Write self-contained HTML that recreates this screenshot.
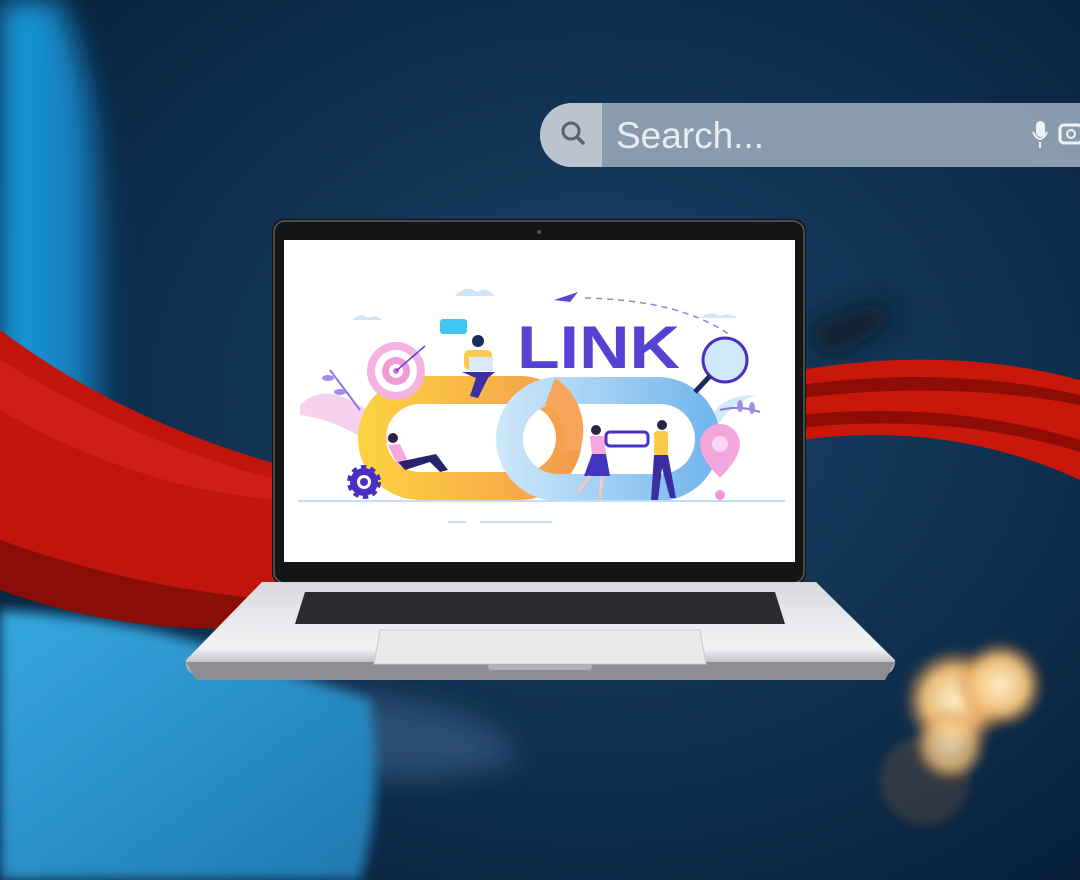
<!DOCTYPE html>
<html><head><meta charset="utf-8"><style>
html,body{margin:0;padding:0;width:1080px;height:880px;overflow:hidden;background:#0b2540}
svg{display:block}
</style></head><body>
<svg width="1080" height="880" viewBox="0 0 1080 880" xmlns="http://www.w3.org/2000/svg">
<defs>
<radialGradient id="bg" cx="0.55" cy="0.45" r="0.7">
<stop offset="0" stop-color="#1b4467"/><stop offset="0.6" stop-color="#0f2f4f"/><stop offset="1" stop-color="#08203a"/>
</radialGradient>
<linearGradient id="sweater" x1="0" y1="0" x2="1" y2="0">
<stop offset="0" stop-color="#1aa0e0"/><stop offset="0.7" stop-color="#1278b8"/><stop offset="1" stop-color="#0f3a60" stop-opacity="0"/>
</linearGradient>
<linearGradient id="knit" x1="0" y1="0" x2="1" y2="1">
<stop offset="0" stop-color="#35a8e0"/><stop offset="1" stop-color="#1f78b0"/>
</linearGradient>
<radialGradient id="bok" cx="0.5" cy="0.5" r="0.5">
<stop offset="0" stop-color="#fff0c8"/><stop offset="0.6" stop-color="#f5c27a" stop-opacity="0.95"/><stop offset="1" stop-color="#c07030" stop-opacity="0"/>
</radialGradient>
<linearGradient id="base" x1="0" y1="0" x2="0" y2="1">
<stop offset="0" stop-color="#d8dadd"/><stop offset="0.7" stop-color="#f2f3f5"/><stop offset="1" stop-color="#9a9ca0"/>
</linearGradient>
<linearGradient id="yel" x1="0" y1="0" x2="1" y2="0">
<stop offset="0" stop-color="#fdd340"/><stop offset="1" stop-color="#f49a4e"/>
</linearGradient>
<linearGradient id="blu" x1="0" y1="0" x2="1" y2="0">
<stop offset="0" stop-color="#cfe8fb"/><stop offset="1" stop-color="#6fb4ec"/>
</linearGradient>
<filter id="blur"><feGaussianBlur stdDeviation="14"/></filter>
<filter id="blur3"><feGaussianBlur stdDeviation="6"/></filter>
<filter id="blur2"><feGaussianBlur stdDeviation="4"/></filter>
</defs>
<rect width="1080" height="880" fill="url(#bg)"/>
<g filter="url(#blur)">
<path d="M0 0 H60 Q110 120 120 330 L110 420 L0 430Z" fill="url(#sweater)"/>
<path d="M300 690 Q500 700 520 760 Q420 790 350 770Z" fill="#2a4e70"/>
<path d="M800 330 L880 300 L900 320 L830 360Z" fill="#0a1a2c"/>
</g>
<g filter="url(#blur3)">
<path d="M0 610 Q150 620 250 660 L370 700 Q385 800 360 880 H0Z" fill="url(#knit)"/>
</g>
<g filter="url(#blur2)">
<circle cx="925" cy="780" r="45" fill="#b8763e" opacity="0.2"/>
<circle cx="955" cy="700" r="52" fill="url(#bok)"/>
<circle cx="1000" cy="685" r="45" fill="url(#bok)"/>
<circle cx="950" cy="745" r="38" fill="url(#bok)" opacity="0.8"/>
</g>
<path d="M0 330 Q120 420 280 465 L280 620 Q140 630 0 570Z" fill="#c0150c"/>
<path d="M0 360 Q150 450 280 480 L280 500 Q140 490 0 410Z" fill="#d8221a" opacity="0.7"/>
<path d="M0 540 Q140 590 280 600 L280 625 Q140 640 0 590Z" fill="#8a0e08"/>
<path d="M800 370 Q950 345 1080 380 L1080 480 Q950 420 800 440Z" fill="#c9170c"/>
<path d="M800 385 Q950 365 1080 395 L1080 405 Q950 380 800 398Z" fill="#8e0c06"/>
<path d="M800 415 Q950 400 1080 440 L1080 452 Q950 412 800 428Z" fill="#8e0c06"/>
<path d="M572 103 H1080 V167 H572 A32 32 0 0 1 572 103Z" fill="#94a5b5" opacity="0.92"/>
<path d="M572 103 H602 V167 H572 A32 32 0 0 1 572 103Z" fill="#b9c4ce"/>
<circle cx="571" cy="131" r="8" fill="none" stroke="#58636e" stroke-width="3"/>
<line x1="577" y1="137" x2="584" y2="144" stroke="#58636e" stroke-width="3.5"/>
<text x="616" y="148" font-family="Liberation Sans, sans-serif" font-size="37" fill="#e8edf2">Search...</text>
<rect x="1036" y="121" width="9" height="16" rx="4.5" fill="#eef2f5"/>
<path d="M1033 132 Q1040 146 1047 132 M1040 142 V148" stroke="#eef2f5" stroke-width="2" fill="none"/>
<rect x="1060" y="125" width="22" height="18" rx="4" fill="none" stroke="#eef2f5" stroke-width="3"/>
<circle cx="1071" cy="134" r="4" fill="none" stroke="#eef2f5" stroke-width="2"/>
<rect x="272" y="219" width="534" height="366" rx="12" fill="#141516"/>
<rect x="274" y="221" width="530" height="362" rx="11" fill="none" stroke="#5a5c60" stroke-width="1.5"/>
<circle cx="539" cy="232" r="2" fill="#555"/>
<rect x="284" y="240" width="511" height="322" fill="#ffffff"/>
<path d="M262 582 H816 L895 660 Q895 672 885 675 H195 Q185 672 186 660Z" fill="url(#base)"/>
<path d="M186 662 H895 L885 680 H196Z" fill="#8c8e92"/>
<path d="M305 592 H775 L785 624 H295Z" fill="#2a2b2e"/>
<path d="M380 630 H700 L706 664 H374Z" fill="#e6e8ea" stroke="#c8cacd" stroke-width="1"/>
<rect x="488" y="664" width="104" height="6" rx="3" fill="#b0b2b6"/>
<g>
<path d="M455 296 q10 -12 22 -4 q10 -6 18 4 Z" fill="#cfe6f8"/>
<path d="M352 320 q8 -8 16 -2 q8 -4 14 2 Z" fill="#cfe6f8"/>
<path d="M700 318 q10 -8 20 -2 q8 -4 18 2Z" fill="#cfe6f8"/>
<path d="M554 300 L578 292 L570 302Z" fill="#5b47d3"/>
<path d="M585 298 Q680 300 730 335" fill="none" stroke="#8d86d8" stroke-width="1.5" stroke-dasharray="6 5"/>
<path d="M300 405 q20 -20 50 -5 q30 15 40 40 L380 450 q-40 -30 -80 -35Z" fill="#f3c7ea" opacity="0.8"/>
<path d="M710 420 q10 -25 45 -25 L745 400 q-20 10 -30 30Z" fill="#cfeafa"/>
<path d="M420 376 H520 A62 62 0 0 1 520 500 H420 A62 62 0 0 1 420 376Z M420 404 H522 A34 34 0 0 1 522 472 H420 A34 34 0 0 1 420 404Z" fill="url(#yel)" fill-rule="evenodd"/>
<path d="M558 377 H658 A62 62 0 0 1 658 501 H558 A62 62 0 0 1 558 377Z M558 404 H660 A34 34 0 0 1 660 474 H558 A34 34 0 0 1 558 404Z" fill="url(#blu)" fill-rule="evenodd"/>
<path d="M555 378 A62 62 0 0 1 580 450 L560 452 A34 34 0 0 0 545 405Z" fill="#f7a55a"/>
<text x="517" y="368" font-family="Liberation Sans, sans-serif" font-weight="bold" font-size="60" fill="#5541d2" textLength="163" lengthAdjust="spacingAndGlyphs">LINK</text>
<circle cx="396" cy="371" r="29" fill="#f4b3e0"/>
<circle cx="396" cy="371" r="21" fill="#fff"/>
<circle cx="396" cy="371" r="14" fill="#f09ad6"/>
<circle cx="396" cy="371" r="7" fill="#fff"/>
<circle cx="396" cy="371" r="3" fill="#e46fc5"/>
<line x1="396" y1="371" x2="425" y2="346" stroke="#5b47d3" stroke-width="1.5"/>
<circle cx="364" cy="482" r="14" fill="#4b2fc4" stroke="#4b2fc4" stroke-width="6" stroke-dasharray="5 4"/>
<circle cx="364" cy="482" r="7" fill="#fff"/>
<circle cx="364" cy="482" r="4" fill="#4b2fc4"/>
<rect x="440" y="319" width="27" height="15" rx="3" fill="#3ec6f0"/>
<circle cx="478" cy="341" r="6" fill="#1d2a5e"/>
<rect x="464" y="350" width="28" height="20" rx="5" fill="#fdc94a"/>
<rect x="469" y="357" width="24" height="14" fill="#dbe9fb"/>
<path d="M462 372 L495 372 L488 378 L478 398 L470 396 L476 378Z" fill="#3a2ea0"/>
<circle cx="393" cy="438" r="5" fill="#2a2445"/>
<path d="M388 445 L400 444 L408 462 L398 466Z" fill="#f6a7dd"/>
<path d="M398 462 L436 454 L448 470 L440 472 L430 462 L405 470Z" fill="#28236c"/>
<circle cx="596" cy="430" r="5" fill="#2a2445"/>
<path d="M590 436 L604 436 L606 455 L592 455Z" fill="#f6a7dd"/>
<path d="M592 454 L606 454 L610 476 L584 476Z" fill="#4334c2"/>
<path d="M590 476 L578 492 M602 476 L600 498" stroke="#f6c9b8" stroke-width="3"/>
<rect x="606" y="432" width="42" height="14" rx="4" fill="none" stroke="#4334c2" stroke-width="3"/>
<circle cx="662" cy="425" r="5" fill="#2a2445"/>
<rect x="654" y="431" width="14" height="24" rx="3" fill="#fdc94a"/>
<path d="M654 455 L668 455 L676 498 L670 498 L662 468 L658 500 L651 500Z" fill="#3a2ea0"/>
<circle cx="725" cy="360" r="22" fill="#cfe8fb" stroke="#4b2fc4" stroke-width="3"/>
<path d="M710 376 L695 392" stroke="#1d2a5e" stroke-width="5"/>
<path d="M720 424 a20 20 0 0 1 20 20 q0 14 -20 34 q-20 -20 -20 -34 a20 20 0 0 1 20 -20Z" fill="#f4a7dc"/>
<circle cx="720" cy="444" r="8" fill="#fbd9f0"/>
<circle cx="720" cy="495" r="5" fill="#f497d2"/>
<path d="M330 370 Q345 390 360 410" stroke="#8b76e0" stroke-width="2" fill="none"/>
<ellipse cx="328" cy="378" rx="6" ry="3" fill="#a48be8"/>
<ellipse cx="340" cy="392" rx="6" ry="3" fill="#a48be8"/>
<path d="M720 410 Q740 405 760 412" stroke="#8b76e0" stroke-width="2" fill="none"/>
<ellipse cx="740" cy="406" rx="3" ry="6" fill="#a48be8"/>
<ellipse cx="752" cy="408" rx="3" ry="6" fill="#a48be8"/>
<line x1="298" y1="501" x2="785" y2="501" stroke="#c5dcf5" stroke-width="2"/>
<line x1="448" y1="522" x2="466" y2="522" stroke="#c5dcf5" stroke-width="2"/>
<line x1="480" y1="522" x2="552" y2="522" stroke="#c5dcf5" stroke-width="2"/>
</g>
</svg>
</body></html>
